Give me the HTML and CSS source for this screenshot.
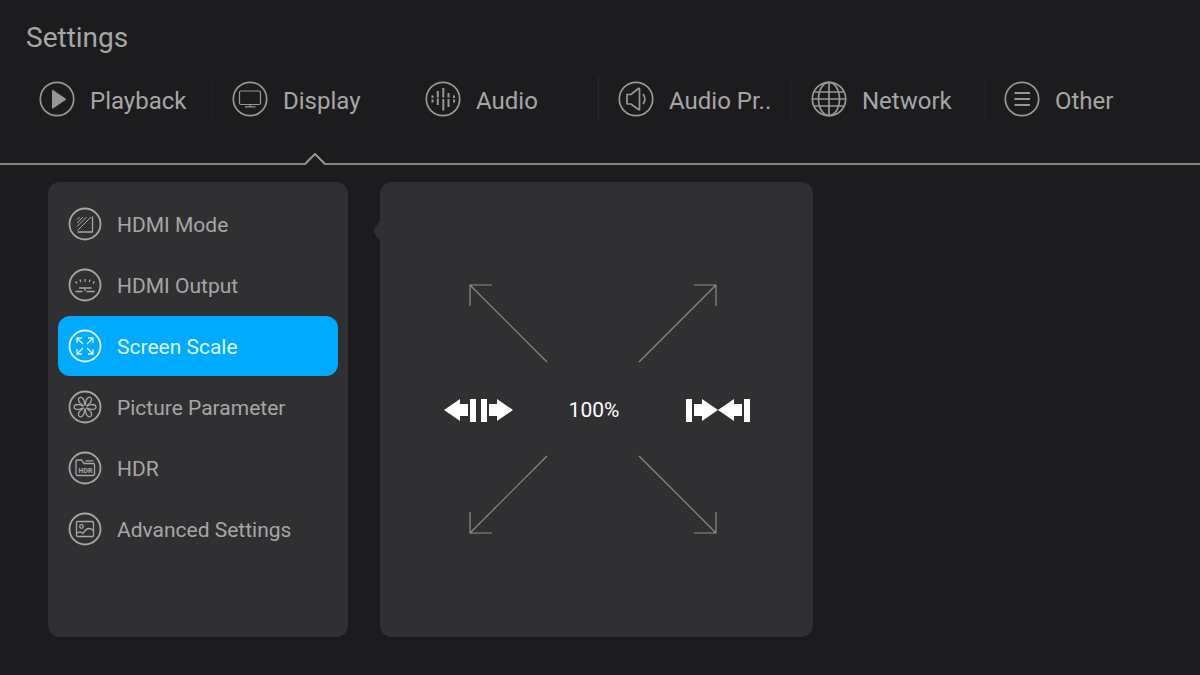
FILE: index.html
```html
<!DOCTYPE html>
<html lang="en">
<head>
    <meta charset="UTF-8">
    <meta name="viewport" content="width=device-width, initial-scale=1.0">
    <title>Settings</title>
    <link rel="stylesheet" href="styles.css">
</head>
<body>
    <header class="header">
        <h1>Settings</h1>
        <nav class="tabs">
            <button class="tab" type="button">
                <svg class="tab-icon" viewBox="0 0 36 36">
                    <circle cx="18" cy="18" r="16.7"/>
                    <path class="solid" d="M13 9.500v17.500q0 1 1 .5l12.500-8.500q1-.7 0-1.400L14 9q-1-.5-1 .5z"/>
                </svg>
                <span>Playback</span>
            </button>
            <button class="tab active" type="button" aria-current="page">
                <svg class="tab-icon" viewBox="0 0 36 36">
                    <circle cx="18" cy="18" r="16.7"/>
                    <rect class="thin" x="7.500" y="10" width="21" height="13.500" rx="1.500"/>
                    <path class="thin" d="M18 23.500v2M13 25.800h10.500"/>
                </svg>
                <span>Display</span>
                <svg class="caret" viewBox="0 0 20 12">
                    <path class="caret-gap" d="M1 10L10 2l9 8v2H1z"/>
                    <path d="M0 11L10 1l10 10"/>
                </svg>
            </button>
            <button class="tab" type="button">
                <svg class="tab-icon" viewBox="0 0 36 36">
                    <circle cx="18" cy="18" r="16.7"/>
                    <path class="bars" d="M7.500 14.500v2.500M7.500 18.500v3M12.800 10v6.500M12.800 17.500v6.500M18.300 7v9.500M18.300 18v11.500M23.500 12v4.500M23.500 18v8M29 14.500v2.500M29 18.500v3"/>
                </svg>
                <span>Audio</span>
            </button>
            <button class="tab strong" type="button">
                <svg class="tab-icon" viewBox="0 0 36 36">
                    <circle cx="18" cy="18" r="16.7"/>
                    <path d="M9 13.500h4l7.500-6q1-.7 1 .5v20q0 1.200-1 .5l-7.500-5.500H9.500q-.5 0-.5-.5z"/>
                    <path d="M25 13q3.800 5 0 10"/>
                </svg>
                <span>Audio Pr..</span>
            </button>
            <button class="tab" type="button">
                <svg class="tab-icon" viewBox="0 0 36 36">
                    <circle cx="18" cy="18" r="16.7"/>
                    <ellipse cx="18" cy="18" rx="10.500" ry="16.700"/>
                    <path d="M18 1v34M1 18h34M3.500 11h29M3.500 25h29"/>
                </svg>
                <span>Network</span>
            </button>
            <button class="tab" type="button">
                <svg class="tab-icon" viewBox="0 0 36 36">
                    <circle cx="18" cy="18" r="16.7"/>
                    <path class="bars" d="M10.500 12h15.500M10.500 18h15.500M10.500 24h15.500"/>
                </svg>
                <span>Other</span>
            </button>
        </nav>
    </header>

    <main class="content">
        <nav class="menu">
            <button class="menu-item" type="button">
                <svg class="menu-icon" viewBox="0 0 34 34">
                    <circle cx="17" cy="17" r="15.500"/>
                    <path d="M24.500 9.500v15.500H9.500"/>
                    <path class="thin" d="M9 12.500l2.500-2.500M9 16l6-6M9 19.500l9.500-9.500M9.500 23.500L23 10"/>
                </svg>
                <span>HDMI Mode</span>
            </button>
            <button class="menu-item" type="button">
                <svg class="menu-icon" viewBox="0 0 34 34">
                    <circle cx="17" cy="17" r="15.500"/>
                    <path d="M7.500 13.500l1.500 2M12 11.500l.7 2.700M17 11v2.800M22 11.500l-.7 2.700M26.500 13.500l-1.500 2M11 20h12.500M7.500 23.500h7M18.500 23.500h8M17 20v3"/>
                </svg>
                <span>HDMI Output</span>
            </button>
            <button class="menu-item selected" type="button" aria-current="true">
                <svg class="menu-icon" viewBox="0 0 34 34">
                    <circle cx="17" cy="17" r="15.500"/>
                    <path d="M15 15L9 9M9 14V9h5M19 15l6-6M20 9h5v5M15 19l-6 6M9 20v5h5M19 19l6 6M25 20v5h-5"/>
                </svg>
                <span>Screen Scale</span>
            </button>
            <button class="menu-item" type="button">
                <svg class="menu-icon" viewBox="0 0 34 34">
                    <circle cx="17" cy="17" r="15.500"/>
                    <path id="petal" d="M18.500 16.200L23.500 14.500Q28 14.500 28 17T23.500 19.500L18.500 17.800"/>
                    <use href="#petal" transform="rotate(60 17 17)"/>
                    <use href="#petal" transform="rotate(120 17 17)"/>
                    <use href="#petal" transform="rotate(180 17 17)"/>
                    <use href="#petal" transform="rotate(240 17 17)"/>
                    <use href="#petal" transform="rotate(300 17 17)"/>
                </svg>
                <span>Picture Parameter</span>
            </button>
            <button class="menu-item" type="button">
                <svg class="menu-icon" viewBox="0 0 34 34">
                    <circle cx="17" cy="17" r="15.500"/>
                    <path d="M8 14v-3.500q0-1.500 1.500-1.500h4l2.500 3.500h9q1.500 0 1.500 1.500v8.500q0 2-2 2H10q-2 0-2-2V14M17.500 9.800h8"/>
                    <text x="17.500" y="21.500">HDR</text>
                </svg>
                <span>HDR</span>
            </button>
            <button class="menu-item" type="button">
                <svg class="menu-icon" viewBox="0 0 34 34">
                    <circle cx="17" cy="17" r="15.500"/>
                    <rect x="8.500" y="9.500" width="17" height="15" rx="1"/>
                    <circle cx="13.500" cy="14.500" r="1.800"/>
                    <path d="M8.500 21.500q3.500-3 6.500 0q3-5 6-5t4.500 2.500"/>
                </svg>
                <span>Advanced Settings</span>
            </button>
        </nav>

        <section class="panel">
            <div class="arrows">
                <svg class="arrow" viewBox="0 0 79 79"><path d="M78 78L1 1M1 22V1h22"/></svg>
                <svg class="arrow" viewBox="0 0 79 79"><path d="M1 78L78 1M56 1h22v21"/></svg>
            </div>
            <div class="scale">
                <button class="scale-btn" type="button" aria-label="Expand">
                    <svg viewBox="0 0 69 24" width="69" height="24">
                        <path d="M0 12L16 1v5h8v12h-8v5zM26 1h6v23h-6zM37 1h6v23h-6zM45 6h8V1l16 11-16 11v-5h-8z"/>
                    </svg>
                </button>
                <output class="scale-value">100%</output>
                <button class="scale-btn shrink" type="button" aria-label="Shrink">
                    <svg viewBox="0 0 66 24" width="66" height="24">
                        <path d="M1 1h6v23H1zM9 6h8V1l16 11-16 11v-5H9zM33 12L49 1v5h8v12h-8v5zM59 1h6v23h-6z"/>
                    </svg>
                </button>
            </div>
            <div class="arrows">
                <svg class="arrow" viewBox="0 0 79 79"><path d="M78 1L1 78M1 57v21h22"/></svg>
                <svg class="arrow" viewBox="0 0 79 79"><path d="M1 1l77 77M56 78h22V57"/></svg>
            </div>
        </section>
    </main>
</body>
</html>
```

FILE: styles.css
```css
* {
    box-sizing: border-box;
}
body {
    display: flex;
    flex-direction: column;
    min-height: 100vh;
    margin: 0;
    background-color: #1c1c1e;
    color: #a6a6a6;
    font-family: Roboto, "Liberation Sans", sans-serif;
}
button {
    border: none;
    padding: 0;
    background: none;
    color: inherit;
    font-family: inherit;
    cursor: pointer;
}
svg {
    flex-shrink: 0;
    fill: none;
    stroke: currentColor;
}

/* Header and tabs */
.header {
    padding-top: 20px;
    border-bottom: 2px solid #858585;
}
h1 {
    margin: 0;
    padding-left: 26px;
    font-size: 28px;
    font-weight: normal;
    line-height: 36px;
}
.tabs {
    display: flex;
    padding: 20px 22px 0 20px;
}
.tab {
    position: relative;
    display: flex;
    flex: 1;
    align-items: flex-start;
    gap: 15px;
    height: 87px;
    padding: 5px 0 0 19px;
    background: linear-gradient(#212123, #212123) right top / 1px 44px no-repeat;
    font-size: 24px;
    line-height: 40px;
    white-space: nowrap;
}
.tab:nth-child(3) {
    background-image: linear-gradient(#29292b, #29292b);
}
.tab:last-child {
    background: none;
}
.tab-icon {
    width: 36px;
    height: 36px;
    stroke-width: 1.7;
    color: #979797;
}
.tab-icon .thin {
    stroke-width: 1.2;
}
.tab-icon .bars {
    stroke-width: 2;
}
.tab-icon .solid {
    fill: currentColor;
    stroke: none;
}
.caret {
    position: absolute;
    left: 92px;
    bottom: -2px;
    width: 20px;
    height: 12px;
    stroke: #979797;
    stroke-width: 2;
}
/* hides the header line below the caret */
.caret-gap {
    fill: #1c1c1e;
    stroke: none;
}

/* Menu and detail panel */
.content {
    display: grid;
    flex: 1;
    grid-template-columns: 300fr 433fr 307fr;
    gap: 32px;
    padding: 17px 48px 38px;
}
.menu,
.panel {
    border-radius: 12px;
    background-color: #303032;
}
.menu {
    display: flex;
    flex-direction: column;
    gap: 1px;
    padding: 12px 10px;
}
.menu-item {
    display: flex;
    align-items: center;
    gap: 15px;
    height: 60px;
    padding-left: 10px;
    border-radius: 12px;
    font-size: 21px;
    white-space: nowrap;
}
.menu-item span {
    padding-top: 2px;
}
.menu-item.selected {
    background-color: #00aaff;
    color: #dcf8ff;
}
.menu-icon {
    width: 34px;
    height: 34px;
    stroke-width: 1.3;
}
.menu-icon > circle:first-child {
    stroke-width: 1.8;
}
.menu-icon .thin {
    stroke-width: 1;
}
.menu-icon text {
    fill: currentColor;
    stroke: none;
    font-size: 7px;
    font-weight: bold;
    text-anchor: middle;
}
.panel {
    position: relative;
    display: flex;
    flex-direction: column;
    align-items: center;
    justify-content: center;
    padding: 0 8px 2px 0;
}
/* pointer towards the menu */
.panel::before {
    content: "";
    position: absolute;
    top: 39px;
    left: -6px;
    width: 6px;
    height: 20px;
    background-color: #303032;
    clip-path: polygon(100% 0, 0 40%, 0 60%, 100% 100%);
}
.arrows {
    display: flex;
    gap: 90px;
}
.arrow {
    width: 79px;
    height: 79px;
    stroke: #8c8c8c;
    stroke-width: 1.2;
}
.scale {
    display: flex;
    align-items: center;
    gap: 56px;
    height: 92px;
    padding: 2px 0 0 10px;
}
.scale-value {
    color: #fff;
    font-size: 21px;
}
.scale-btn {
    display: flex;
}
.scale-btn.shrink {
    margin-left: 10px;
}
.scale-btn svg {
    fill: #fff;
    stroke: none;
}
```
